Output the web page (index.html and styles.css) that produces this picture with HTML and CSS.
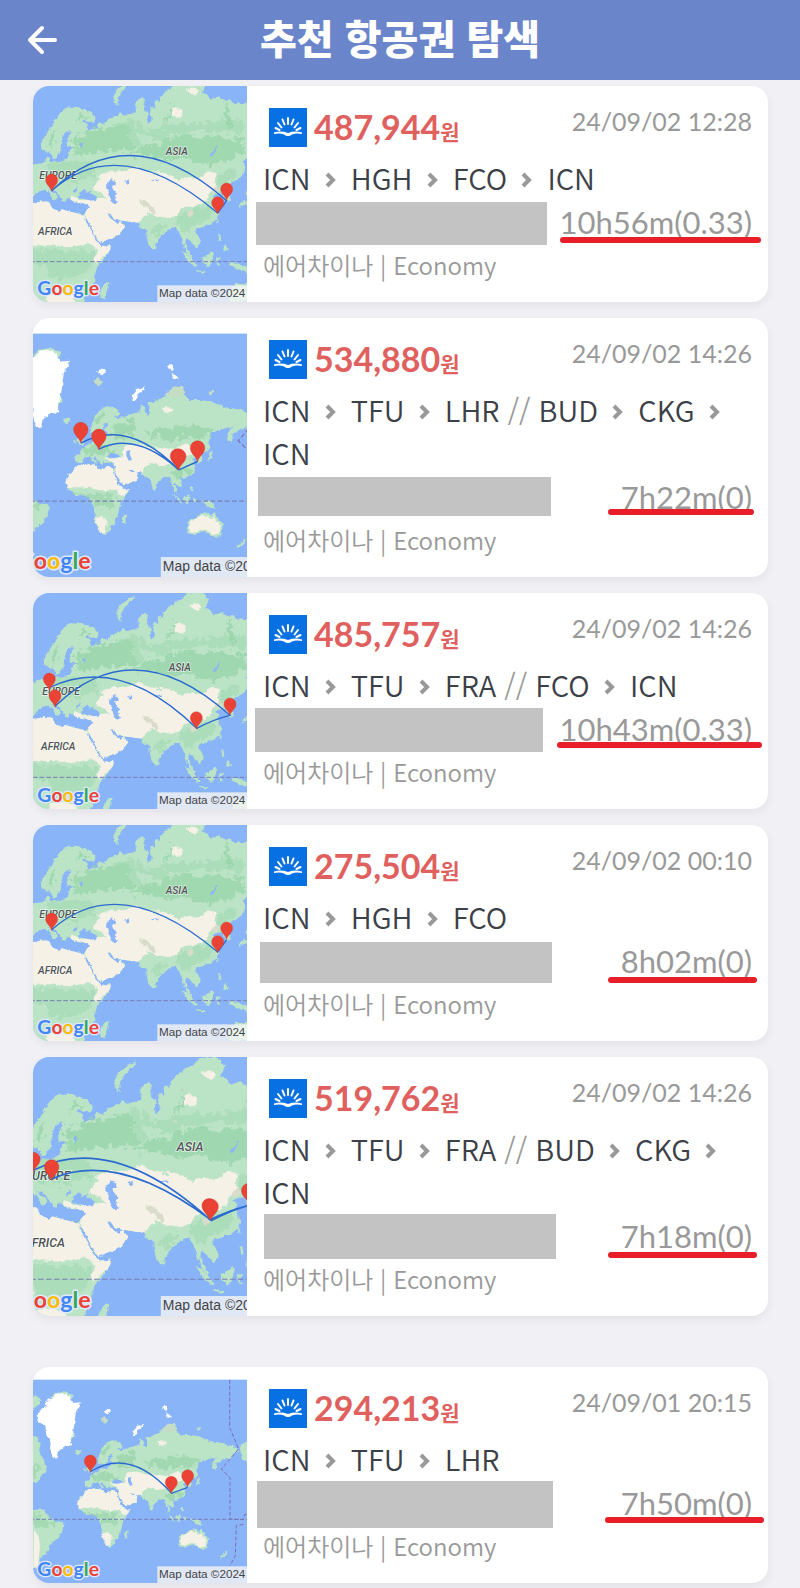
FILE: index.html
```html
<!DOCTYPE html>
<html lang="ko">

<head>
    <meta charset="UTF-8">
    <meta name="viewport" content="width=device-width, initial-scale=1.0">
    <title>추천 항공권 탐색</title>
    <link rel="stylesheet" href="styles.css">
</head>

<body>
    <!-- shared drawings -->
    <svg class="defs" aria-hidden="true">
        <!-- roughens the edges of the land areas -->
        <filter id="rough" x="-5%" y="-5%" width="110%" height="110%">
            <feTurbulence type="fractalNoise" baseFrequency="0.08" numOctaves="3" seed="4" />
            <feDisplacementMap in="SourceGraphic" scale="12" xChannelSelector="R" yChannelSelector="G" />
        </filter>
        <filter id="woods" x="-5%" y="-5%" width="110%" height="110%">
            <feTurbulence type="fractalNoise" baseFrequency="0.06" numOctaves="4" seed="9" />
            <feDisplacementMap in="SourceGraphic" scale="40" xChannelSelector="R" yChannelSelector="G" />
        </filter>

        <symbol id="chevron" viewBox="0 0 12 16">
            <path d="M2 2l6 6-6 6" fill="none" stroke="#999" stroke-width="4" />
        </symbol>

        <symbol id="logo" viewBox="0 0 38 39">
            <rect width="38" height="39" fill="#0770e3" />
            <path d="M19 10v6M13.500 11.500l2 5M24.500 11.500l-2 5M9 15l3.500 4.500M29 15l-3.500 4.500M6.500 20l4 2M31.500 20l-4 2" stroke="#fff" stroke-width="2" stroke-linecap="round" />
            <path d="M5 24.500Q12 22.500 19 25Q26 22.500 33 24.500V26Q27 25 23 26.500Q21 28 19 28Q17 28 15 26.500Q11 25 5 26z" fill="#fff" />
        </symbol>

        <g id="pin">
            <path d="M0 0C-3-14-18-19-18-34A18 18 0 0 1 18-34C18-19 3-14 0 0z" fill="#ea4335" stroke="#c9352a" stroke-width="1" />
        </g>

        <g id="credit">
            <text class="google" x="22" y="633"><tspan fill="#4285f4">G</tspan><tspan fill="#ea4335">o</tspan><tspan fill="#fbbc05">o</tspan><tspan fill="#4285f4">g</tspan><tspan fill="#34a853">l</tspan><tspan fill="#ea4335">e</tspan></text>
            <rect x="382" y="604" width="270" height="52" fill="#f5f5f5" fill-opacity="0.8" />
            <text class="copyright" x="387" y="639">Map data ©2024</text>
        </g>

        <g id="eurasia">
            <rect x="-60" y="-60" width="800" height="800" fill="#8ab4f8" />
            <!-- mainland -->
            <path filter="url(#rough)" fill="#bbe4c6" d="M-40 250L10 246L20 240L36 238L46 234L48 222L56 221L60 234L84 233L108 226L116 212L120 196L138 190L112 190L110 172L116 156L124 146L118 138L104 150L94 170L92 200L82 210L78 224L68 222L60 204L46 206L34 194L32 178L44 158L62 130L84 95L96 80L112 70L126 72L136 66L152 72L180 82L198 100L192 116L172 114L160 106L158 114L170 124L176 142L190 132L202 134L206 116L224 122L232 106L262 96L270 88L290 92L318 84L316 64L326 44L336 38L344 56L342 74L354 86L352 108L358 122L366 106L360 92L362 66L376 74L374 50L392 54L388 38L404 28L420 12L444 -2L466 -20L500 -26L528 -2L518 24L544 44L566 40L584 50L600 46L612 56L640 58L700 50V250L650 222L640 232L646 250L640 262L636 276L620 290L604 298L598 312L590 320L602 340L598 354L588 352L582 336L570 328L556 332L546 336L560 346L552 356L560 370L566 388L560 404L544 420L522 426L512 432L500 432L496 444L508 462L512 480L498 492L488 478L474 466L468 460L466 480L476 500L486 518L482 522L468 504L460 480L454 460L446 442L438 430L424 434L404 446L390 460L378 476L374 492L366 498L356 482L350 456L348 436L334 432L326 420L312 412L286 412L266 408L250 402L242 390L232 388L240 402L252 414L262 418L272 410L284 430L274 446L254 460L228 468L210 476L202 466L192 446L180 424L170 404L164 402L176 430L192 458L204 478L214 486L242 484L240 500L222 524L204 546L196 566L196 590L184 612L166 636L156 690H-60V366L0 358L40 352L60 354L62 370L84 382L96 376L110 380L140 388L160 390L172 384L180 366L178 352L152 356L128 352L118 340L108 344L106 358L96 352L92 338L78 322L66 312L58 314L70 326L84 338L78 348L68 346L60 330L44 318L34 320L18 328L4 346L-40 356z" />
            <!-- forests -->
            <path filter="url(#woods)" fill="#94d3a7" opacity="0.7" d="M124 164L160 150L184 138L206 132L250 124L284 118L300 140L294 160L314 186L300 200L270 196L250 204L210 206L176 208L140 214L130 206L136 196L146 186L128 180zM340 176L380 186L404 160L430 160L470 150L520 162L560 156L600 164L640 160V210L624 212L606 220L590 236L566 234L540 244L500 240L484 226L460 220L430 230L400 226L380 216L340 212L310 216L304 206L330 202zM424 60L434 72L410 96L396 120L404 124L420 104zM56 156L72 140L80 158L70 180L56 186zM590 56L600 90L606 130L600 140L590 112L584 78zM146 84L160 92L170 104L156 110L140 104z" />
            <path filter="url(#woods)" fill="#94d3a7" opacity="0.4" d="M60 236L100 232L160 232L200 246L186 280L150 290L112 298L60 290L40 276L44 262zM552 290L590 262L620 258L624 270L600 290L580 312L568 318zM440 396L470 376L520 366L550 376L552 392L536 410L506 420L480 430L476 454L460 434L440 424zM-20 500L60 496L120 500L170 500L190 510L186 544L160 574L120 584L60 578L50 548L-20 530zM370 424L400 420L410 428L390 444L374 464L366 450zM320 100L350 140L400 130L440 120L500 120L560 110L600 100L640 110V150L560 140L500 140L430 150L380 170L320 150zM290 108L310 104L330 190L310 200z" />
            <!-- deserts and steppes -->
            <path filter="url(#rough)" fill="#f6f1e6" d="M-60 368L0 358L40 352L60 354L62 370L84 382L96 376L110 380L140 388L160 392L176 430L192 458L204 478L214 486L242 484L240 500L222 516L200 538L188 526L204 506L196 488L176 478L120 490L60 484L-60 484zM164 396L178 366L160 358L122 348L124 334L150 348L196 346L228 344L214 326L188 316L200 296L214 284L200 276L236 262L280 262L320 246L352 264L388 262L420 272L446 290L470 278L500 284L534 262L560 268L554 292L560 306L540 322L528 350L496 366L456 370L440 396L410 402L380 396L352 384L356 394L340 398L328 418L290 412L266 408L250 402L242 390L232 388L240 402L262 418L272 410L284 430L274 446L254 460L210 476L192 446L180 424L170 404zM424 74L440 68L458 82L456 96L444 102L428 94zM470 14L490 10L506 22L494 32L478 28zM50 610L90 604L128 620L140 680H50z" />
            <path filter="url(#rough)" fill="#d9dccb" d="M332 348l20 6 14 16 12 16 -10 6 -16-20 -20-12zM540 322l16-16 14 6 -12 16zM470 386l18-6 4 12 -16 6z" />
            <path filter="url(#woods)" fill="#bbe4c6" d="M322 244l34-6 40 6 20 16 -30 6 -34-8zM452 266l40-16 30 6 -20 26 -34-4zM336 408l20-14 18 12 -14 14 -18 8z" />
            <!-- inland seas -->
            <path filter="url(#rough)" fill="#8ab4f8" d="M144 342L148 326L160 318L172 326L184 318L180 328L198 336L204 346L184 350L160 344zM230 298L244 286L258 292L256 302L246 308L252 324L260 330L254 340L262 356L248 358L240 340L236 320L228 308zM286 290l10-4 2 10 -8 4zM540 212l12-12 8-16 2 4 -10 22 -10 8zM126 318l12-6 6 8 -14 4zM148 182l8-8 4 8 -6 6zM362 290l22-6 2 4 -20 6z" />
            <!-- islands -->
            <path filter="url(#rough)" fill="#bbe4c6" d="M262 66L252 56L250 38L258 20L276 4L300 -12L308 -6L284 12L270 30L264 46zM454 498L470 508L488 528L500 546L492 548L474 530zM500 558l24 4 2 6 -26-6zM516 520L530 516L544 500L552 512L546 530L540 546L524 544zM558 524l12-6 2 6 -8 4 4 20 -6-2zM564 452l8 2 2 18 -6-2zM578 484l10 0 6 14 -10 4zM596 534l14 0 30 10 20 8 v20 l-30-14 -24-12zM598 620l20-20 20 0 20-8 v60h-60zM216 610L230 592L238 596L234 620L222 646L212 642L210 624zM372 486l8 4 -2 10 -8-4zM560 408l6-2 -2 14 -4-2zM628 362l10-10 20 0 v8 l-20 4 -8 8zM646 318l14-10 v20 l-12 2zM-40 200l30 12 12 22 -42 10z" />
            <path d="M-60 533H740" stroke="#7a7fb4" stroke-width="3" stroke-dasharray="14 6" />
            <text class="region" x="407" y="213">ASIA</text>
            <text class="region" x="28" y="285">EUROPE</text>
            <text class="region" x="24" y="452">AFRICA</text>
        </g>

        <g id="world">
            <rect x="0" y="44" width="700" height="640" fill="#8ab4f8" />
            <!-- Americas -->
            <path filter="url(#rough)" fill="#bbe4c6" d="M-20 90L20 92L36 100L28 118L10 136L-20 140zM-20 206L20 216L32 236L26 262L40 280L50 318L36 330L24 350L-20 356zM-20 436L44 434L54 452L72 466L100 474L98 496L86 520L66 530L54 556L34 576L26 604L-20 620zM60 98L74 84L100 78L124 86L126 102L100 110zM118 206l10-8 4 14 -10 14zM134 260l14-4 6 4 -8 8zM628 240l40-12v70l-32-14z" />
            <path filter="url(#woods)" fill="#94d3a7" opacity="0.6" d="M-20 446L40 450L52 464L80 476L60 484L40 490L-20 484zM-20 296L20 298L30 318L10 340L-20 344z" />
            <path fill="#f6f1e6" d="M12 494l14 20 4 30 -6 60 -14 4z" />
            <path filter="url(#rough)" fill="#fff" d="M20 152L32 132L50 126L46 108L70 100L80 86L100 84L118 92L130 114L152 112L150 124L138 138L134 168L130 200L122 222L126 240L102 246L84 260L80 282L68 276L60 252L62 230L48 208L46 184L24 172zM220 142l10-8 14 2 -10 12zM398 124l12-2 2 12 -6 6zM404 142l16 8 2 8 -12-4zM306 216L308 200L324 182L342 176L338 184L322 196L314 212z" />
            <!-- Africa -->
            <path filter="url(#rough)" fill="#bbe4c6" d="M172 374L200 368L216 372L226 382L248 378L260 382L266 402L276 424L286 434L300 434L296 446L280 466L274 492L266 514L252 538L240 546L226 540L216 512L214 486L206 462L196 450L170 448L150 436L144 416L152 396zM284 504l10-12 2 10 -8 20 -6-4z" />
            <path filter="url(#rough)" fill="#f6f1e6" d="M172 374L200 368L216 372L226 382L248 378L260 382L266 402L276 424L286 432L300 434L290 450L274 448L270 434L240 438L200 430L146 428L144 416L152 396zM216 506L232 500L246 512L240 542L228 540z" />
            <path filter="url(#woods)" fill="#94d3a7" opacity="0.6" d="M160 438L200 438L256 446L270 456L262 472L246 482L222 482L208 462L190 448z" />
            <!-- Eurasia -->
            <path filter="url(#rough)" fill="#bbe4c6" d="M164 348L182 346L180 334L196 324L208 318L214 304L218 312L240 306L246 290L240 284L248 268L238 272L230 292L222 304L214 296L204 296L202 280L216 254L230 234L246 226L272 234L278 248L262 250L274 256L292 250L312 244L328 238L334 220L340 236L346 252L352 236L350 216L366 214L388 200L412 190L440 196L450 210L480 210L508 214L540 228L576 234L608 244L630 258L612 264L602 278L584 280L560 296L556 318L546 310L548 292L560 280L530 284L504 296L500 318L506 326L496 342L480 348L482 362L474 370L472 356L462 356L464 374L468 384L458 396L440 404L428 404L436 424L426 430L418 418L412 416L424 446L414 438L408 420L402 402L388 404L374 418L366 438L360 432L354 406L340 404L334 394L316 390L304 382L300 386L312 392L322 394L318 412L300 420L284 424L278 412L266 394L260 382L264 366L244 368L236 362L234 374L226 366L218 352L212 356L222 368L216 370L206 354L190 352L182 366L166 368z" />
            <path filter="url(#woods)" fill="#94d3a7" opacity="0.65" d="M250 296L262 274L292 268L312 264L322 280L316 292L290 300L262 304zM346 290L376 276L400 280L440 270L470 278L504 280L516 286L500 296L488 314L470 310L440 300L410 312L380 306L350 300zM414 388L440 378L458 384L450 394L430 400L416 408L408 398zM218 250l16-12 12 2 -16 20 -16 20zM184 334l40-8 34 4 6 12 -36 6 -36-4z" />
            <path filter="url(#rough)" fill="#f6f1e6" d="M262 366L240 358L262 352L286 354L282 338L296 322L330 318L350 330L380 328L408 334L440 320L466 326L458 344L440 354L410 368L386 376L356 368L338 380L334 394L316 390L304 382L300 386L322 394L318 412L300 420L284 424L278 412L266 394zM386 232l14-6 10 8 -10 10 -12-4z" />
            <path fill="#8ab4f8" d="M246 350l10-8 16 4 8 6 -18 4 -14-2zM294 338l10-2 -2 8 6 16 -8 2 -6-12z" />
            <path filter="url(#rough)" fill="#c5dcc5" d="M392 196L414 176L438 178L442 196L416 204zM500 188l12-4 4 8 -10 6zM212 160l16-6 6 10 -10 12z" />
            <path filter="url(#rough)" fill="#bbe4c6" d="M170 312l10-14 6 10 2 14 -14 0zM160 312l6-2 0 10 -6 0zM494 358l8-8 4-16 4 4 -4 16 -8 8zM408 442l16 14 10 16 -8-4zM436 454l14-8 4 8 -8 14 -10-4zM460 456l6 0 2 14 -6-2zM484 460l22 6 14 16 -20-4 -14-12zM452 424l6 0 4 14 -6 0zM570 574l14-10 8-8 -2 10 -16 16z" />
            <path filter="url(#rough)" fill="#f6f1e6" stroke="#bbe4c6" stroke-width="5" d="M450 516L464 506L478 500L486 496L500 494L504 506L514 494L520 510L532 522L530 544L518 552L504 544L484 536L466 544L450 542z" />
            <path d="M0 463H700" stroke="#7a7fb4" stroke-width="3" stroke-dasharray="12 6" />
            <path d="M599 44V188L626 252L574 312L600 338V462L640 464L644 448H690M640 478L619 482L616 572L600 602" fill="none" stroke="#806fb0" stroke-width="3" stroke-dasharray="12 6" />
        </g>
    </svg>

    <header class="header">
        <button class="back" type="button" aria-label="뒤로">
            <svg width="32" height="32" viewBox="0 0 32 32">
                <path d="M4 16H29M16 4L4 16L16 28" fill="none" stroke="#fff" stroke-width="4" stroke-linecap="round" stroke-linejoin="round" />
            </svg>
        </button>
        <h1 class="title">추천 항공권 탐색</h1>
    </header>

    <main class="list">
        <article class="card">
            <svg class="map" viewBox="9 6 642 648" preserveAspectRatio="xMidYMid slice">
                <use href="#eurasia" />
                <path class="path" d="M65 320Q300 95 590 350L563 387Q270 140 65 320" />
                <use href="#pin" x="65" y="322" />
                <use href="#pin" x="590" y="349" />
                <use href="#pin" x="563" y="390" />
                <use href="#credit" />
            </svg>
            <div class="info">
                <div class="head">
                    <svg class="logo"><use href="#logo" /></svg>
                    <strong class="price">487,944<span class="won">원</span></strong>
                    <time class="date">24/09/02 12:28</time>
                </div>
                <p class="route">ICN <svg class="chevron"><use href="#chevron" /></svg> HGH <svg class="chevron"><use href="#chevron" /></svg> FCO <svg class="chevron"><use href="#chevron" /></svg> ICN</p>
                <div class="detail">
                    <svg class="mask"><rect x="1" y="1" width="291" height="43" /></svg>
                    <span class="duration">10h56m(0.33)</span>
                    <svg class="marker"><path d="M7 39H202" /></svg>
                </div>
                <p class="airline">에어차이나 | Economy</p>
            </div>
        </article>

        <article class="card">
            <svg class="map" viewBox="9 6 642 648" preserveAspectRatio="xMidYMid slice">
                <use href="#world" x="2" y="1" />
                <path class="path" d="M182 319Q300 255 427 386Q320 288 227 334M427 386L474 365" />
                <use href="#pin" x="182" y="319" />
                <use href="#pin" x="227" y="336" />
                <use href="#pin" x="474" y="365" />
                <use href="#pin" x="424" y="385" />
                <use href="#pin" x="427" y="386" />
                <use href="#credit" />
            </svg>
            <div class="info">
                <div class="head">
                    <svg class="logo"><use href="#logo" /></svg>
                    <strong class="price">534,880<span class="won">원</span></strong>
                    <time class="date">24/09/02 14:26</time>
                </div>
                <p class="route">ICN <svg class="chevron"><use href="#chevron" /></svg> TFU <svg class="chevron"><use href="#chevron" /></svg> LHR <span class="stop">//</span> BUD <svg class="chevron"><use href="#chevron" /></svg> CKG <svg class="chevron"><use href="#chevron" /></svg> ICN</p>
                <div class="detail">
                    <svg class="mask"><rect x="3" y="1" width="293" height="39" /></svg>
                    <span class="duration">7h22m(0)</span>
                    <svg class="marker"><path d="M55 36H195" /></svg>
                </div>
                <p class="airline">에어차이나 | Economy</p>
            </div>
        </article>

        <article class="card">
            <svg class="map" viewBox="9 6 642 648" preserveAspectRatio="xMidYMid slice">
                <use href="#eurasia" x="9" y="26" />
                <path class="path" d="M58 290Q270 188 500 412Q550 385 600 373Q312 115 75 346" />
                <use href="#pin" x="58" y="298" />
                <use href="#pin" x="75" y="348" />
                <use href="#pin" x="499" y="414" />
                <use href="#pin" x="600" y="373" />
                <use href="#credit" />
            </svg>
            <div class="info">
                <div class="head">
                    <svg class="logo"><use href="#logo" /></svg>
                    <strong class="price">485,757<span class="won">원</span></strong>
                    <time class="date">24/09/02 14:26</time>
                </div>
                <p class="route">ICN <svg class="chevron"><use href="#chevron" /></svg> TFU <svg class="chevron"><use href="#chevron" /></svg> FRA <span class="stop">//</span> FCO <svg class="chevron"><use href="#chevron" /></svg> ICN</p>
                <div class="detail">
                    <svg class="mask"><rect x="0" y="0" width="288" height="44" /></svg>
                    <span class="duration">10h43m(0.33)</span>
                    <svg class="marker"><path d="M4 37H203" /></svg>
                </div>
                <p class="airline">에어차이나 | Economy</p>
            </div>
        </article>

        <article class="card">
            <svg class="map" viewBox="9 6 642 648" preserveAspectRatio="xMidYMid slice">
                <use href="#eurasia" />
                <path class="path" d="M590 350L563 387Q270 140 65 320" />
                <use href="#pin" x="65" y="322" />
                <use href="#pin" x="590" y="349" />
                <use href="#pin" x="563" y="390" />
                <use href="#credit" />
            </svg>
            <div class="info">
                <div class="head">
                    <svg class="logo"><use href="#logo" /></svg>
                    <strong class="price">275,504<span class="won">원</span></strong>
                    <time class="date">24/09/02 00:10</time>
                </div>
                <p class="route">ICN <svg class="chevron"><use href="#chevron" /></svg> HGH <svg class="chevron"><use href="#chevron" /></svg> FCO</p>
                <div class="detail">
                    <svg class="mask"><rect x="5" y="2" width="292" height="41" /></svg>
                    <span class="duration">8h02m(0)</span>
                    <svg class="marker"><path d="M55 40H198" /></svg>
                </div>
                <p class="airline">에어차이나 | Economy</p>
            </div>
        </article>

        <article class="card">
            <svg class="map" viewBox="9 6 642 648" preserveAspectRatio="xMidYMid slice">
                <use href="#eurasia" x="15" y="29" />
                <path class="path" d="M62 290Q260 190 505 413Q555 388 610 375M109 311Q275 238 509 415Q560 388 610 375" />
                <use href="#pin" x="62" y="296" />
                <use href="#pin" x="109" y="315" />
                <use href="#pin" x="503" y="412" />
                <use href="#pin" x="508" y="414" />
                <use href="#pin" x="602" y="374" />
                <use href="#credit" />
            </svg>
            <div class="info">
                <div class="head">
                    <svg class="logo"><use href="#logo" /></svg>
                    <strong class="price">519,762<span class="won">원</span></strong>
                    <time class="date">24/09/02 14:26</time>
                </div>
                <p class="route">ICN <svg class="chevron"><use href="#chevron" /></svg> TFU <svg class="chevron"><use href="#chevron" /></svg> FRA <span class="stop">//</span> BUD <svg class="chevron"><use href="#chevron" /></svg> CKG <svg class="chevron"><use href="#chevron" /></svg> ICN</p>
                <div class="detail">
                    <svg class="mask"><rect x="9" y="-1" width="292" height="45" /></svg>
                    <span class="duration">7h18m(0)</span>
                    <svg class="marker"><path d="M55 40H198" /></svg>
                </div>
                <p class="airline">에어차이나 | Economy</p>
            </div>
        </article>

        <article class="card card-apart">
            <svg class="map" viewBox="9 6 642 648" preserveAspectRatio="xMidYMid slice">
                <use href="#world" />
                <path class="path" d="M181 320Q300 245 425 385L473 367" />
                <use href="#pin" x="181" y="322" />
                <use href="#pin" x="473" y="366" />
                <use href="#pin" x="424" y="386" />
                <use href="#credit" />
            </svg>
            <div class="info">
                <div class="head">
                    <svg class="logo"><use href="#logo" /></svg>
                    <strong class="price">294,213<span class="won">원</span></strong>
                    <time class="date">24/09/01 20:15</time>
                </div>
                <p class="route">ICN <svg class="chevron"><use href="#chevron" /></svg> TFU <svg class="chevron"><use href="#chevron" /></svg> LHR</p>
                <div class="detail">
                    <svg class="mask"><rect x="2" y="-1" width="296" height="47" /></svg>
                    <span class="duration">7h50m(0)</span>
                    <svg class="marker"><path d="M52 38H205" /></svg>
                </div>
                <p class="airline">에어차이나 | Economy</p>
            </div>
        </article>
    </main>
</body>

</html>
```

FILE: styles.css
```css
* {
    box-sizing: border-box;
}

body {
    margin: 0;
    background-color: #f0f0f5;
    font-family: "Noto Sans CJK KR", sans-serif;
}

.defs {
    position: absolute;
    width: 0;
    height: 0;
}

/* Header */
.header {
    display: grid;
    grid-template-columns: 60px 1fr 60px;
    align-items: center;
    height: 80px;
    padding: 0 12px;
    background-color: #6b85cb;
    color: #fff;
}

.back {
    display: flex;
    align-items: center;
    justify-content: center;
    height: 60px;
    padding: 0;
    border: 0;
    background: none;
    cursor: pointer;
}

.title {
    margin: 0;
    padding-bottom: 6px;
    font-size: 40px;
    font-weight: 900;
    line-height: 60px;
    text-align: center;
}

/* Cards */
.list {
    display: flex;
    flex-direction: column;
    gap: 16px;
    padding: 6px 32px 5px 33px;
}

.card {
    display: flex;
    overflow: hidden;
    border-radius: 16px;
    background-color: #fff;
    box-shadow: 0 4px 10px rgba(0, 0, 0, 0.06);
}

.card-apart {
    margin-top: 35px;
}

.map {
    flex: 0 0 214px;
    width: 214px;
}

.path {
    fill: none;
    stroke: #2b6bd0;
    stroke-width: 4px;
}

.region {
    font: italic 31px Roboto, sans-serif;
    font-weight: 500;
    fill: #4f5355;
    stroke: #fff;
    stroke-width: 4px;
    stroke-opacity: 0.7;
    paint-order: stroke;
}

.google {
    font: 58px Lato, sans-serif;
    font-weight: bold;
    stroke: #dfe9fb;
    stroke-width: 8px;
    stroke-linejoin: round;
    paint-order: stroke;
}

.copyright {
    font: 35px "Liberation Sans", sans-serif;
    fill: #444;
}

.info {
    flex: 1;
    min-width: 0;
    padding: 16px;
}

.head {
    display: flex;
    align-items: center;
    gap: 7px;
    height: 50px;
    margin-bottom: 4px;
    padding-left: 6px;
}

.logo {
    width: 38px;
    height: 39px;
}

.price {
    padding-top: 4px;
    color: #e0605e;
    font-family: Lato, "Noto Sans CJK KR", sans-serif;
    font-size: 34px;
    line-height: 46px;
}

.won {
    font-size: 21px;
}

.date {
    align-self: flex-start;
    margin-left: auto;
    color: #999;
    font-family: Lato, sans-serif;
    font-size: 25px;
    line-height: 38px;
}

.route {
    margin: 0 0 2px;
    color: #3c4047;
    font-size: 29px;
    font-weight: 350;
    line-height: 43px;
}

.chevron {
    width: 12px;
    height: 16px;
    margin: 0 6px;
    vertical-align: 2px;
}

.stop {
    color: #999;
}

.detail {
    position: relative;
    height: 43px;
    text-align: right;
}

.duration {
    color: #999;
    font-family: Lato, sans-serif;
    font-size: 31px;
    line-height: 42px;
}

/* Block that hides the schedule */
.mask {
    position: absolute;
    top: 0;
    left: -8px;
    width: 304px;
    height: 43px;
    overflow: visible;
    fill: #c3c3c3;
}

/* Red pen line under the duration */
.marker {
    position: absolute;
    top: 0;
    right: -12px;
    width: 208px;
    height: 43px;
    overflow: visible;
    stroke: #e81e28;
    stroke-width: 6px;
    stroke-linecap: round;
}

.airline {
    margin: 0;
    color: #999;
    font-size: 24px;
    font-weight: 350;
    line-height: 42px;
}
```
